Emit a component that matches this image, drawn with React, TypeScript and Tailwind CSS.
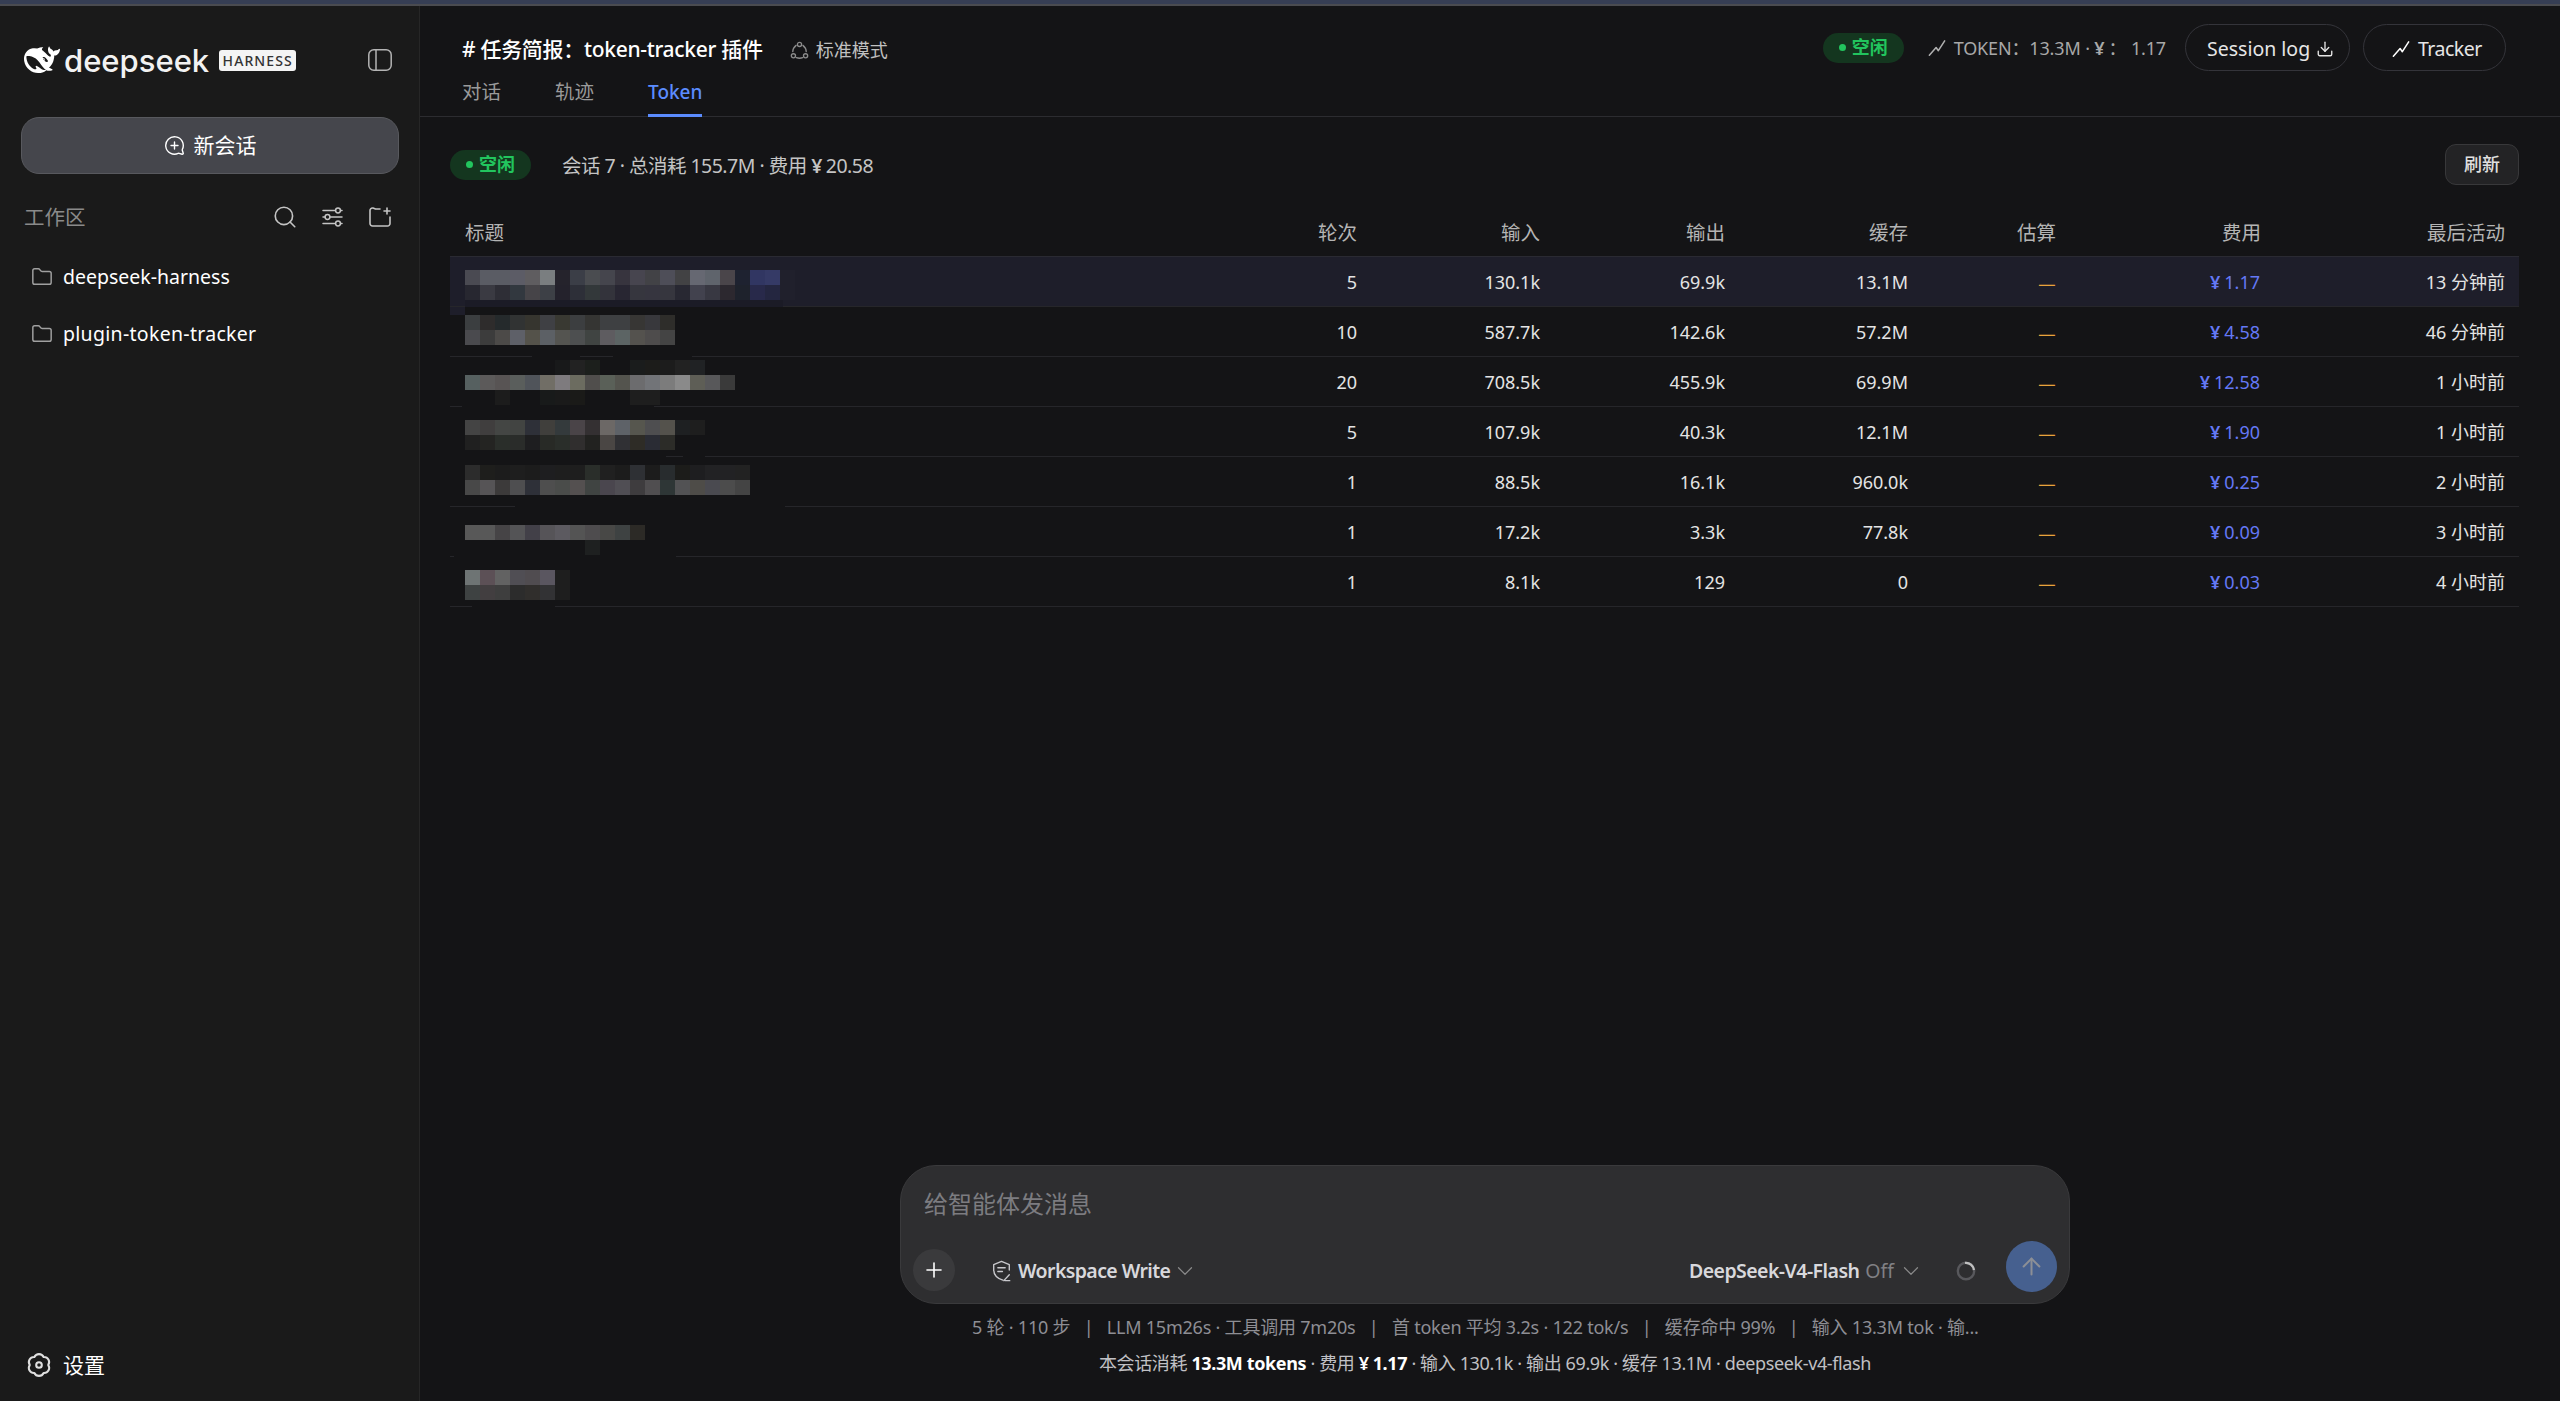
import React from "react";
import { Search, Folder, ChevronDown, Plus, ArrowUp, Download, MessageCirclePlus } from "lucide-react";

const FONT = "font-['Noto_Sans','Noto_Sans_CJK_SC',sans-serif]";

const WHALE =
  "M23.748 4.482c-.254-.124-.364.113-.512.234-.051.039-.094.09-.137.136-.372.397-.806.657-1.373.626-.829-.046-1.537.214-2.163.848-.133-.782-.575-1.248-1.247-1.548-.352-.156-.708-.311-.955-.65-.172-.241-.219-.51-.305-.774-.055-.16-.11-.323-.293-.35-.2-.031-.278.136-.356.276-.313.572-.434 1.202-.422 1.84.027 1.436.633 2.58 1.838 3.393.137.093.172.187.129.323-.082.28-.18.552-.266.833-.055.179-.137.217-.329.14a5.526 5.526 0 01-1.736-1.18c-.857-.828-1.631-1.742-2.597-2.458a11.365 11.365 0 00-.689-.471c-.985-.957.13-1.743.388-1.836.27-.098.093-.432-.779-.428-.872.004-1.67.295-2.687.684a3.055 3.055 0 01-.465.137 9.597 9.597 0 00-2.883-.102c-1.885.21-3.39 1.102-4.497 2.623C.082 8.606-.231 10.684.152 12.85c.403 2.284 1.569 4.175 3.36 5.653 1.858 1.533 3.997 2.284 6.438 2.14 1.482-.085 3.133-.284 4.994-1.86.47.234.962.327 1.78.397.63.059 1.236-.03 1.705-.128.735-.156.684-.837.419-.961-2.155-1.004-1.682-.595-2.113-.926 1.096-1.296 2.746-2.642 3.392-7.003.05-.347.007-.565 0-.845-.004-.17.035-.237.23-.256a4.173 4.173 0 001.545-.475c1.396-.763 1.96-2.015 2.093-3.517.02-.23-.004-.467-.247-.588zM11.581 18c-2.089-1.642-3.102-2.183-3.52-2.16-.392.024-.321.471-.235.763.09.288.207.486.371.739.114.167.192.416-.113.603-.673.416-1.842-.14-1.897-.167-1.361-.802-2.5-1.86-3.301-3.307-.774-1.393-1.224-2.887-1.298-4.482-.02-.386.093-.522.477-.592a4.696 4.696 0 011.529-.039c2.132.312 3.946 1.265 5.468 2.774.868.86 1.525 1.887 2.202 2.891.72 1.066 1.494 2.082 2.48 2.914.348.292.625.514.891.677-.802.09-2.14.11-3.054-.614zm1-6.44a.306.306 0 01.415-.287.302.302 0 01.2.288.306.306 0 01-.31.307.303.303 0 01-.304-.308zm3.11 1.596c-.2.081-.399.151-.59.16a1.245 1.245 0 01-.798-.254c-.274-.23-.47-.358-.552-.758a1.73 1.73 0 01.016-.588c.07-.327-.008-.537-.239-.727-.187-.156-.426-.199-.688-.199a.559.559 0 01-.254-.078c-.11-.054-.2-.19-.114-.358.028-.054.16-.186.192-.21.356-.202.767-.136 1.146.016.352.144.618.408 1.001.782.391.451.462.576.685.914.176.265.336.537.445.848.067.195-.019.354-.25.452z";

type IconProps = { className?: string };
const stroke = { fill: "none", stroke: "currentColor", strokeLinecap: "round", strokeLinejoin: "round" } as const;

const PanelIcon = ({ className }: IconProps) => (
  <svg viewBox="0 0 24 22" className={className} {...stroke} strokeWidth={1.5}>
    <rect x="0.8" y="0.8" width="22.4" height="20.4" rx="5" />
    <path d="M8 1v20" />
  </svg>
);
const SlidersIcon = ({ className }: IconProps) => (
  <svg viewBox="0 0 21 20" className={className} {...stroke} strokeWidth={1.5}>
    <path d="M1 3.5h12M18.6 3.5h1.4M1 10h2M8 10h12M1 16.5h12M18.6 16.5h1.4" />
    <circle cx="16" cy="3.5" r="2.4" />
    <circle cx="5.5" cy="10" r="2.4" />
    <circle cx="16" cy="16.5" r="2.4" />
  </svg>
);
const NewFolderIcon = ({ className }: IconProps) => (
  <svg viewBox="0 0 23 20" className={className} {...stroke} strokeWidth={1.6}>
    <path d="M11 2H6.5L4 1H3.5A2.5 2.5 0 0 0 1 3.5v13A2.5 2.5 0 0 0 3.5 19h15a2.5 2.5 0 0 0 2.5-2.5V10" />
    <path d="M18 1v6M15 4h6" />
  </svg>
);
const GearIcon = ({ className }: IconProps) => (
  <svg viewBox="0 0 24 24" className={className} {...stroke} strokeWidth={1.9}>
    <path d="M16.25 4.64A4.7 4.7 0 0 1 20.5 12A4.7 4.7 0 0 1 16.25 19.36A4.7 4.7 0 0 1 7.75 19.36A4.7 4.7 0 0 1 3.5 12A4.7 4.7 0 0 1 7.75 4.64A4.7 4.7 0 0 1 16.25 4.64Z" />
    <circle cx="12" cy="12" r="2.6" />
  </svg>
);
const ModeIcon = ({ className }: IconProps) => (
  <svg viewBox="0 0 20 20" className={className} {...stroke} strokeWidth={1.4}>
    <circle cx="10" cy="3.6" r="2.2" />
    <circle cx="3.6" cy="15.6" r="2.2" />
    <circle cx="16.4" cy="15.6" r="2.2" />
    <path d="M6.4 4.6C4.2 6.4 3 8.8 2.9 11.2M13.6 4.6c2.2 1.8 3.4 4.2 3.5 6.6M6.6 17.6c2.2.7 4.6.7 6.8 0" />
  </svg>
);
const SparkIcon = ({ className }: IconProps) => (
  <svg viewBox="0 0 20 20" className={className} {...stroke} strokeWidth={1.7}>
    <path d="M1.5 18 9 9.5l2.5 3.5L18.5 2" />
  </svg>
);
const ShieldIcon = ({ className }: IconProps) => (
  <svg viewBox="0 0 20 24" className={className} {...stroke} strokeWidth={1.5}>
    <path d="M11.5 22C5 20 1.5 16 1.5 10.5V5L10 1.5 18.5 5v6" />
    <path d="M6 8.5h8M6 12.5h5" />
    <path d="M12.5 22.5 18.5 16M14 22.5h5" />
  </svg>
);

const Yen = ({ children }: { children?: React.ReactNode }) => (
  <>
    <span className="mr-[4px] font-semibold">¥</span>
    {children}
  </>
);

type Rect = [number, number, number, number, string];
const grid = (y: number, start: number, colours: (string | null)[]): Rect[] =>
  colours.flatMap((c, i): Rect[] => (c ? [[15 + i * 15, y, 15, 15, c]] : []));

const n = null;
const MOSAIC: Rect[] = [
  [15, 43, 318, 7, "#1b1b26"],
  [0, 50, 15, 8, "#1e1e2a"],
  [15, 50, 235, 8, "#141416"],
  ...grid(13, 0, ["#4a4a52","#5a5c64","#5a5c64","#5c5c66","#5f5d60","#7a7e80","#25232c","#3b3e47","#4a4c50","#45454d","#37343e","#47454f","#424246","#4e4e58","#424244","#666872","#5f646c","#4a454a","#1e2230","#313662","#353a66","#20202c"]),
  ...grid(28, 0, ["#272730","#3a3a42","#2e2e36","#32383f","#464448","#3d4046","#24222c","#2d2f38","#33383a","#33333b","#282632","#36363e","#36353f","#36363e","#282832","#42424e","#383842","#2c282f","#1e222c","#28294a","#242640","#20202c"]),
  ...grid(58, 0, ["#3b3e40","#2e2c2c","#252a2c","#313333","#36352f","#3f4044","#393932","#3c3e40","#353533","#3e4042","#3e4042","#373634","#38383c","#2e2d2a"]),
  ...grid(73, 0, ["#4a4a4e","#3c3c3c","#4c4a48","#5e6068","#54524a","#5c6065","#545450","#4d4f50","#404442","#5e5c60","#5c6464","#54524e","#4e4c4c","#444444"]),
  [82, 99, 48, 2, "#141416"],
  [163, 99, 79, 2, "#141416"],
  ...grid(103, 0, [n,n,n,n,n,n,"#18191a","#222222","#1c1f1c",n,n,"#1a1c1c","#1c1c1a","#1c1c1c","#222222","#202224"]),
  ...grid(118, 0, ["#566060","#5c5a5a","#585454","#5a5e5c","#50545a","#716e66","#7e7b7e","#6c6c60","#504e4c","#5a6058","#54544e","#6c6c6e","#727478","#7c7c7c","#8a8a8a","#5e5e56","#58585a","#3a3a3a"]),
  ...grid(133, 0, [n,n,"#1c1c1c",n,n,"#181a1a","#1a1a1a","#1a1a18",n,n,n,"#1e1e1e","#1e1e1e"]),
  [12, 149, 192, 2, "#141416"],
  ...grid(163, 0, ["#444444","#403e3e","#444644","#424442","#2e3038","#403f3c","#343a3c","#4a4448","#343032","#6c6866","#5e6268","#56564e","#4e4e50","#54524c","#1e2022","#1e1e1e"]),
  ...grid(178, 0, ["#202020","#242422","#2a2e2a","#2a2c2a","#1e1e20","#282a26","#2a2e2a","#302e2e","#222220","#4a4644","#303034","#2e2c26","#2a2c34","#2c2c28"]),
  [0, 199, 216, 2, "#141416"],
  [233, 199, 22, 2, "#141416"],
  ...grid(208, 0, ["#2c2c2c","#1e1e1c","#1c1c1c","#1e1e1e","#1c1c1c","#1e1e20","#1e1e1e","#1e1e1e","#2a2e2a","#202020","#1c1c1c","#2e3034","#1c1c1c","#282c2e","#1c1c1a","#1e1e20","#222224","#222224","#222222"]),
  ...grid(223, 0, ["#484848","#565456","#3c3a3a","#4e4e50","#2e3038","#4e4e4e","#4a4c4a","#545050","#404442","#4a464e","#504e54","#3e3c3e","#504e50","#2e3636","#525254","#4e4c48","#4a4a50","#4c4c4c","#444444"]),
  [65, 249, 270, 2, "#141416"],
  ...grid(268, 0, ["#585858","#585858","#464446","#545456","#424048","#565458","#5c5a60","#545454","#4e4c4e","#484846","#3e4242","#2c2a26"]),
  ...grid(283, 0, [n,n,n,n,n,n,n,n,"#1e2020"]),
  [4, 299, 222, 2, "#141416"],
  ...grid(313, 0, ["#6e7474","#5c5056","#626262","#504e54","#504c50","#5a5660","#1e1e1e"]),
  ...grid(328, 0, ["#3e4242","#423e40","#3e3e3e","#2c2c2c","#302e2c","#323234","#1e1e1e"]),
  [22, 349, 83, 2, "#141416"],
];

const Redaction = () => (
  <svg className="absolute left-0 top-0 pointer-events-none" width="420" height="352" shapeRendering="crispEdges">
    {MOSAIC.map(([x, y, w, h, c], i) => (
      <rect key={i} x={x} y={y} width={w} height={h} fill={c} />
    ))}
  </svg>
);

const ROWS = [
  ["5", "130.1k", "69.9k", "13.1M", "1.17", "13 分钟前"],
  ["10", "587.7k", "142.6k", "57.2M", "4.58", "46 分钟前"],
  ["20", "708.5k", "455.9k", "69.9M", "12.58", "1 小时前"],
  ["5", "107.9k", "40.3k", "12.1M", "1.90", "1 小时前"],
  ["1", "88.5k", "16.1k", "960.0k", "0.25", "2 小时前"],
  ["1", "17.2k", "3.3k", "77.8k", "0.09", "3 小时前"],
  ["1", "8.1k", "129", "0", "0.03", "4 小时前"],
];
const GRID = "grid grid-cols-[720px_201px_183px_185px_183px_148px_205px_244px] items-center";

const StatusPill = () => (
  <span className="flex h-[30px] w-[81px] items-center justify-center gap-[6px] rounded-full bg-[#14361f] text-[18px] font-bold text-[#22c55e]">
    <span className="size-[7px] rounded-full bg-[#22c55e]" />
    空闲
  </span>
);

export default function App() {
  return (
    <div className={`${FONT} flex h-screen w-full flex-col overflow-hidden bg-[#141416] text-[#e2e2e4]`}>
      <div className="h-[4px] shrink-0 bg-[#363e54]" />
      <div className="h-[2px] shrink-0 bg-[#4a4b50]" />
      <div className="flex min-h-0 flex-1">
        <aside className="flex w-[420px] shrink-0 flex-col border-r border-[#262626] bg-[#1a1a1a] px-[21px]">
          <div className="mt-[29px] flex h-[50px] items-center justify-between pl-[3px] pr-[6px]">
            <div className="flex items-center">
              <svg viewBox="0 0 24 24" className="size-[36px] text-white" fill="currentColor">
                <path d={WHALE} />
              </svg>
              <span className="ml-[4px] font-['Inter',sans-serif] text-[31px] font-medium leading-none text-[#f2f2f2]">deepseek</span>
              <span className="ml-[10px] flex h-[21px] w-[77px] items-center justify-center rounded-[3px] bg-[#f4f4f4] text-[14px] font-medium tracking-[1.1px] text-[#333]">HARNESS</span>
            </div>
            <PanelIcon className="h-[22px] w-[24px] text-[#b4b4b4]" />
          </div>
          <button className="mt-[32px] flex h-[57px] w-[378px] items-center justify-center gap-[9px] rounded-[18px] border border-[#58595e] bg-[#45464c] text-[21px] text-white">
            <MessageCirclePlus className="size-[21px] scale-x-[-1]" strokeWidth={1.6} />
            新会话
          </button>
          <div className="mt-[26px] flex h-[34px] items-center justify-between pl-[3px] pr-[6px]">
            <span className="text-[20.5px] text-[#8a8a8a]">工作区</span>
            <div className="flex items-center text-[#c4c4c4]">
              <Search className="size-[26px]" strokeWidth={1.5} />
              <SlidersIcon className="ml-[24px] h-[20px] w-[21px]" />
              <NewFolderIcon className="ml-[26px] h-[20px] w-[23px]" />
            </div>
          </div>
          <div className="mt-[29px] flex flex-col gap-[29px] pl-[10px] text-[19.5px] leading-[28px] text-white">
            <div className="flex items-center gap-[10px]">
              <Folder className="size-[22px] text-[#a0a0a0]" strokeWidth={1.6} />
              deepseek-harness
            </div>
            <div className="flex items-center gap-[10px]">
              <Folder className="size-[22px] text-[#a0a0a0]" strokeWidth={1.6} />
              <span className="tracking-[0.3px]">plugin-token-tracker</span>
            </div>
          </div>
          <div className="mb-[21px] mt-auto flex items-center gap-[11px] pl-[5px] text-[21px] leading-[30px] text-white">
            <GearIcon className="size-[26px] text-[#e0e0e0]" />
            设置
          </div>
        </aside>

        <main className="flex min-w-0 flex-1 flex-col">
          <header className="flex h-[111px] shrink-0 justify-between border-b border-[#2c2c30] pl-[42px] pr-[54px]">
            <div>
              <div className="mt-[29px] flex h-[30px] items-center">
                <span className="text-[21px] font-medium tracking-[-0.3px] text-white"># 任务简报：token-tracker 插件</span>
                <span className="ml-[27px] flex items-center gap-[7px] text-[18px] text-[#c0c0c0]">
                  <ModeIcon className="size-[19px] text-[#8c8c8c]" />
                  标准模式
                </span>
              </div>
              <div className="mt-[13px] flex gap-[54px] text-[19.5px] leading-[28px] text-[#9a9a9a]">
                <span className="h-[39px]">对话</span>
                <span className="h-[39px]">轨迹</span>
                <span className="h-[39px] border-b-[3px] border-[#5b8cff] text-[19px] font-medium text-[#5b8cff]">Token</span>
              </div>
            </div>
            <div className="mt-[18px] flex h-[47px] items-center">
              <StatusPill />
              <span className="ml-[24px] flex items-center text-[18px] tracking-[-0.15px] text-[#a8a8a8]">
                <SparkIcon className="mr-[8px] size-[18px] text-[#b0b0b0]" />
                <span className="pt-[2px]">TOKEN：13.3M · <Yen />： 1.17</span>
              </span>
              <button className="ml-[19px] flex h-[47px] w-[165px] items-center gap-[6px] rounded-full border border-[#34343a] pl-[21px] pt-[2px] text-[19.5px] text-[#e6e6e6]">
                Session log
                <Download className="size-[18px]" strokeWidth={1.8} />
              </button>
              <button className="ml-[13px] flex h-[47px] w-[143px] items-center gap-[8px] rounded-full border border-[#34343a] pl-[28px] pt-[2px] text-[19.5px] tracking-[-0.5px] text-[#e6e6e6]">
                <SparkIcon className="size-[18px] text-white" />
                Tracker
              </button>
            </div>
          </header>

          <section className="flex min-h-0 flex-1 flex-col pl-[30px] pr-[41px]">
            <div className="mt-[27px] flex h-[41px] items-center justify-between">
              <div className="flex items-center">
                <StatusPill />
                <span className="ml-[31px] pt-[2px] text-[19.5px] tracking-[-0.52px] text-[#c4c4c4]">会话 7 · 总消耗 155.7M · 费用 <Yen>20.58</Yen></span>
              </div>
              <button className="h-[41px] w-[74px] rounded-[11px] border border-[#38383a] bg-[#232325] text-[18px] font-medium text-[#e0e0e0]">刷新</button>
            </div>
            <div className={`${GRID} mt-[22px] h-[50px] border-b border-[#2a2a32] pt-[2px] text-right text-[19.5px] text-[#b4b4b4]`}>
              <span className="pl-[15px] text-left">标题</span>
              {["轮次", "输入", "输出", "缓存", "估算", "费用", "最后活动"].map((h) => (
                <span key={h} className="pr-[14px]">{h}</span>
              ))}
            </div>
            <div className="relative">
              {ROWS.map((r, i) => (
                <div key={i} className={`${GRID} h-[50px] border-b border-[#26262a] pt-[2px] text-right text-[18px] text-[#e4e4e4] ${i === 0 ? "bg-[#1e1e2a]" : ""}`}>
                  <span />
                  <span className="pr-[14px]">{r[0]}</span>
                  <span className="pr-[14px]">{r[1]}</span>
                  <span className="pr-[14px]">{r[2]}</span>
                  <span className="pr-[14px]">{r[3]}</span>
                  <span className="pr-[14px] font-['Noto_Sans_CJK_SC',sans-serif] text-[20px] text-[#e8a33c]">—</span>
                  <span className="pr-[15px] text-[#6478f5]"><Yen>{r[4]}</Yen></span>
                  <span className="pr-[14px]">{r[5]}</span>
                </div>
              ))}
              <Redaction />
            </div>

            <div className="-ml-[30px] mt-auto flex w-[2140px] flex-col pl-[480px]">
              <div className="flex h-[139px] w-[1170px] flex-col rounded-[36px] border border-[#3a3a3c] bg-[#2e2e30] pb-[11px] pl-[12px] pr-[12px]">
                <div className="mt-[21px] pl-[11px] text-[24px] leading-[34px] text-[#7c7c80]">给智能体发消息</div>
                <div className="mt-auto flex items-end">
                  <span className="mb-[1px] flex size-[42px] items-center justify-center rounded-full bg-[#3a3a3c] text-white">
                    <Plus className="size-[24px]" strokeWidth={1.6} />
                  </span>
                  <span className="ml-[37px] flex h-[42px] items-center text-[19.5px] font-semibold text-[#d8d8dc]">
                    <ShieldIcon className="h-[22px] w-[19px] text-[#c8c8cc]" />
                    <span className="ml-[7px] tracking-[-0.6px]">Workspace Write</span>
                    <ChevronDown className="ml-[2px] size-[26px] text-[#8a8a8a]" strokeWidth={1.1} />
                  </span>
                  <span className="ml-auto flex h-[42px] items-center text-[19.5px] font-semibold text-[#d8d8dc]">
                    <span className="tracking-[-0.55px]">DeepSeek-V4-Flash</span>
                    <span className="ml-[6px] font-normal text-[#808084]">Off</span>
                    <ChevronDown className="ml-[4px] size-[26px] text-[#8a8a8a]" strokeWidth={1.1} />
                    <svg viewBox="0 0 20 20" className="ml-[32px] size-[20px]" fill="none" strokeWidth="2.4">
                      <circle cx="10" cy="10" r="8.2" stroke="#58585c" />
                      <path d="M9 1.9A8.2 8.2 0 0 1 18 9" stroke="#c0c0c0" />
                    </svg>
                  </span>
                  <span className="ml-[30px] flex h-[51px] w-[51px] items-center justify-center rounded-full bg-[#46608f] text-[#8c8f96]">
                    <ArrowUp className="size-[27px]" strokeWidth={1.8} />
                  </span>
                </div>
              </div>
              <div className="mt-[9px] flex h-[28px] items-center whitespace-pre pl-[72px] text-[18px] tracking-[-0.22px] text-[#8e8e94]">
                5 轮 · 110 步{"   |   "}LLM 15m26s · 工具调用 7m20s{"   |   "}首 token 平均 3.2s · 122 tok/s{"   |   "}缓存命中 99%{"   |   "}输入 13.3M tok · 输...
              </div>
              <div className="mt-[8px] flex h-[28px] w-[1170px] items-center justify-center text-[18px] tracking-[-0.38px] text-[#c0c0c4]">
                <span className="whitespace-pre">本会话消耗 <b className="font-bold text-white">13.3M tokens</b> · 费用 <b className="font-bold text-white"><Yen>1.17</Yen></b> · 输入 130.1k · 输出 69.9k · 缓存 13.1M · deepseek-v4-flash</span>
              </div>
              <div className="h-[24px]" />
            </div>
          </section>
        </main>
      </div>
    </div>
  );
}
